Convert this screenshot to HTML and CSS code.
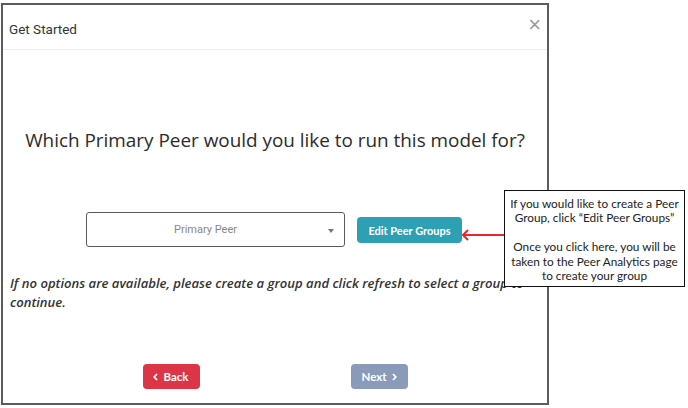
FILE: index.html
```html
<!DOCTYPE html>
<html lang="en">
<head>
    <meta charset="UTF-8">
    <meta name="viewport" content="width=device-width, initial-scale=1.0">
    <title>Get Started</title>
    <link rel="stylesheet" href="styles.css">
</head>
<body>

<div class="modal">
    <div class="modal-header">
        <span class="modal-title">Get Started</span>
        <span class="close">&times;</span>
    </div>
    <div class="modal-body">
        <h2>Which Primary Peer would you like to run this model for?</h2>

        <div class="peer-row">
            <div class="select">
                <span>Primary Peer</span>
                <span class="caret"></span>
            </div>
            <button class="btn btn-edit">Edit Peer Groups</button>
        </div>

        <p class="hint">If no options are available, please create a group and click refresh to select a group to continue.</p>

        <div class="modal-footer">
            <button class="btn btn-back">
                <svg class="chev" width="5" height="8" viewBox="0 0 5 8"><polyline points="4,1 1.2,4 4,7" fill="none" stroke="white" stroke-width="1.8"/></svg>
                Back
            </button>
            <button class="btn btn-next">
                Next
                <svg class="chev" width="5" height="8" viewBox="0 0 5 8"><polyline points="1,1 3.8,4 1,7" fill="none" stroke="white" stroke-width="1.8"/></svg>
            </button>
        </div>
    </div>
</div>

<!-- annotation -->
<svg class="arrow" width="46" height="14" viewBox="0 0 46 14">
    <line x1="3" y1="7" x2="46" y2="7" stroke="#e8262b" stroke-width="2"/>
    <polyline points="8,2 3,7 8,12" fill="none" stroke="#e8262b" stroke-width="2"/>
</svg>
<div class="callout">
    <p>If you would like to create a Peer<br>Group, click &ldquo;Edit Peer Groups&rdquo;</p>
    <p>Once you click here, you will be<br>taken to the Peer Analytics page<br>to create your group</p>
</div>

</body>
</html>
```

FILE: styles.css
```css
body {
    margin: 0;
    padding: 0;
    background-color: white;
    font-family: "Open Sans", Arial, sans-serif;
}

.modal {
    width: 544px;
    height: 398px;
    margin: 3px 0 0 1px;
    border: 2px solid #5c5c5c;
    background-color: white;
}

.modal-header {
    height: 44px;
    border-bottom: 1px solid #ececec;
    display: flex;
    align-items: center;
    justify-content: space-between;
    padding: 0 6px 0 6px;
}

.modal-title {
    font-family: Roboto, Arial, sans-serif;
    font-size: 13.5px;
    color: #333;
    margin-top: 4px;
}

.close {
    font-family: Arial, sans-serif;
    font-size: 22px;
    color: #9a9a9a;
    margin-top: -4px;
}

.modal-body h2 {
    margin: 75px 0 0;
    text-align: center;
    font-size: 18.9px;
    font-weight: 400;
    line-height: 30px;
    color: #2b2b2b;
}

.peer-row {
    display: flex;
    justify-content: center;
    align-items: center;
    gap: 12px;
    margin-top: 57px;
}

.select {
    width: 257px;
    height: 33px;
    border: 1px solid #5a5a5a;
    border-radius: 3px;
    position: relative;
    display: flex;
    align-items: center;
    justify-content: center;
    font-family: Roboto, Arial, sans-serif;
    font-size: 11px;
    color: #888;
    margin-left: -2px;
}

.select span:first-child {
    margin-left: -20px;
}

.caret {
    position: absolute;
    right: 10px;
    top: 16px;
    border-left: 3.5px solid transparent;
    border-right: 3.5px solid transparent;
    border-top: 4px solid #777;
}

.btn {
    border: none;
    color: white;
    font-family: Lato, "Open Sans", sans-serif;
    font-weight: 700;
    font-size: 11px;
    border-radius: 4px;
    padding: 0;
    cursor: pointer;
    display: flex;
    align-items: center;
    justify-content: center;
    gap: 5px;
}

.btn-edit {
    width: 105px;
    height: 26px;
    background-color: #2ea0b4;
    margin-top: 1px;
}

.hint {
    margin: 27px 0 0;
    padding: 0 7px;
    font-style: italic;
    font-weight: 600;
    font-size: 13.1px;
    line-height: 19px;
    color: #333;
}

.modal-footer {
    display: flex;
    justify-content: center;
    gap: 151px;
    margin-top: 52px;
}

.btn-back,
.btn-next {
    width: 57px;
    height: 25px;
    font-size: 11.5px;
}

.btn-back {
    background-color: #dc3545;
}

.btn-next {
    background-color: #8a9bb9;
}

.arrow {
    position: absolute;
    left: 460px;
    top: 228px;
}

.callout {
    position: absolute;
    left: 504px;
    top: 190px;
    width: 179px;
    height: 89px;
    border: 1.5px solid #111;
    background-color: white;
    text-align: center;
    font-family: Lato, "Open Sans", sans-serif;
    font-size: 11.8px;
    line-height: 14.4px;
    color: #222;
    padding-top: 6px;
}

.callout p {
    margin: 0 0 14.4px;
}
```
